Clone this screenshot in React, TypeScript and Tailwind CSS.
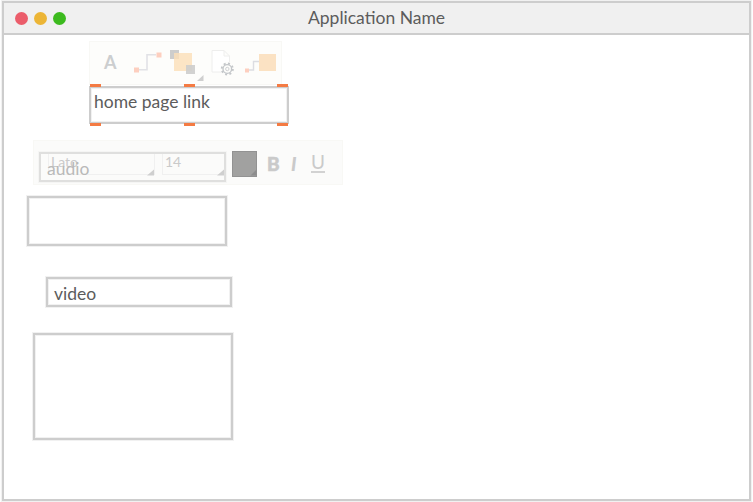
import React from 'react';

const frame = 'border-2 border-[#cdcdcd] shadow-[0_0_0_1px_#f1f1f1,inset_0_0_0_1px_#f1f1f1]';

function ShapeToolbar() {
  return (
    <div className="ml-[85px] mt-[6px] h-[44px] w-[193px] shrink-0 border border-[#f8f8f5] bg-[#fdfdfb]">
      <svg width="191" height="42" viewBox="90 42 191 42" className="block">
        <text x="104" y="69" fontFamily="Lato" fontWeight="700" fontSize="18" fill="#cccecf">A</text>
        <path d="M139 69.700H147V54.800H156" fill="none" stroke="#e1e2e6" strokeWidth="1.600" />
        <path d="M134 67.500h5v5h-5zM156.500 52.500h5v5h-5z" fill="#fdcfbf" />
        <path d="M170 50h9v9h-9z" fill="#cdcdcc" />
        <path d="M174 53h18v18h-18z" fill="#fbdfb8" fillOpacity=".82" />
        <path d="M186 65h9v9h-9z" fill="#cdcdcc" fillOpacity=".9" />
        <path d="M197 81l6.500-6v6z" fill="#cfcfcf" />
        <path d="M212 50.500h12l5.500 5.500v16h-17.500zM224 50.500v5.500h5.500" fill="#fff" stroke="#eeeeed" />
        <circle cx="227.300" cy="69" r="7" fill="#fdfdfb" />
        <circle cx="227.300" cy="69" r="5.600" fill="none" stroke="#c3c6c9" strokeWidth="1.800" strokeDasharray="2 2.398" />
        <circle cx="227.300" cy="69" r="4.300" fill="none" stroke="#c3c6c9" strokeWidth="1.300" />
        <circle cx="227.300" cy="69" r="1.700" fill="none" stroke="#d0d2d4" />
        <path d="M249 70h4.500v-8.500h6" fill="none" stroke="#dcdde2" strokeWidth="1.400" />
        <path d="M245 68.500h4v4h-4z" fill="#fdcfbf" />
        <path d="M259 54h17v17h-17z" fill="#fbe2c3" />
      </svg>
    </div>
  );
}

function Handles() {
  return (
    <div className="flex justify-between">
      <i className="h-[3px] w-[11px] bg-[#f47b43]" />
      <i className="h-[3px] w-[11px] bg-[#f47b43]" />
      <i className="h-[3px] w-[11px] bg-[#f47b43]" />
    </div>
  );
}

function TextToolbar() {
  return (
    <div className="relative ml-[29px] mt-[14px] h-[45px] w-[310px] shrink-0 border border-[#f8f8f5] bg-[#fbfbfa]">
      <div className="flex pt-[10px] text-[#cacaca]">
        <div className="ml-[14px] h-[24px] w-[107px] border border-[#f0f0f0] pl-[2px] text-[14px] leading-[19px]">Lato</div>
        <div className="ml-[7px] h-[24px] w-[63px] border border-[#f0f0f0] pl-[2px] text-[14px] leading-[19px]">14</div>
        <div className="ml-[7px] h-[26px] w-[25px] border border-[#929292] bg-[#a1a1a0]" />
        <b className="ml-[10px] w-[15px] text-[19px] font-black leading-[25px] [-webkit-text-stroke:0.5px_#cacaca]">B</b>
        <i className="ml-[9px] w-[10px] text-[19px] font-black leading-[25px]">I</i>
        <span className="ml-[10px] mt-[2px] h-[20px] border-b-2 border-[#d2d2d2] text-[19px] leading-[18px]">U</span>
      </div>
      <svg className="absolute left-0 top-0" width="308" height="43" viewBox="34 141 308 43">
        <path d="M147 175.500l7-6v6zM217 175.500l7-6v6z" fill="#cfcfcf" />
        <path d="M250.500 175.500l6-6v6z" fill="#8d8d8d" />
      </svg>
      <div className="absolute left-[5px] top-[11px] h-[30px] w-[187px] border-2 border-[#dfdfde] pl-[6px] text-[17.5px] leading-[29px] text-[#b9b9b9] shadow-[0_0_0_1px_#f5f5f4]">
        audio
      </div>
    </div>
  );
}

export default function App() {
  return (
    <div className="h-[502px] w-[753px] overflow-hidden bg-[#fdfdfd] pl-[2px] pt-px font-['Lato',sans-serif] text-[#5c5c5c]">
      <main className="flex h-[500px] w-[749px] flex-col border-2 border-[#cdcdcd] bg-white shadow-[0_0_0_1px_#f1f1f1]">
        <header className="flex h-[32px] shrink-0 items-center border-b-2 border-[#cdcdcd] bg-[#f0f0f0]">
          <div className="ml-[11px] flex gap-[6px]">
            <i className="size-[13px] rounded-full bg-[#eb5d6b]" />
            <i className="size-[13px] rounded-full bg-[#ecb536]" />
            <i className="size-[13px] rounded-full bg-[#3cba1e]" />
          </div>
          <h1 className="ml-[242px] mt-[-1px] whitespace-nowrap text-[17.5px] leading-5">Application Name</h1>
        </header>
        <ShapeToolbar />
        <section className="ml-[85px] mt-[-1px] w-[200px] shrink-0">
          <div className="px-px"><Handles /></div>
          <div className="mt-[-1px] h-[38px] border-2 border-[#cdcdcd] bg-white pl-[3px] pt-[4px] text-[17.5px] leading-[20px] shadow-[inset_0_0_0_1px_#f1f1f1]">
            home page link
          </div>
          <div className="relative mt-[-1px] px-px"><Handles /></div>
        </section>
        <TextToolbar />
        <div className={`ml-[23px] mt-[11px] h-[50px] w-[200px] shrink-0 ${frame}`} />
        <div className={`ml-[42px] mt-[31px] h-[30px] w-[186px] shrink-0 pl-[6px] text-[17.5px] leading-[29px] ${frame}`}>video</div>
        <div className={`ml-[29px] mt-[26px] h-[107px] w-[200px] shrink-0 ${frame}`} />
      </main>
    </div>
  );
}
